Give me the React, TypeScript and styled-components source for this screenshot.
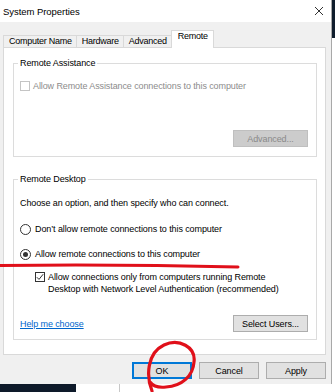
import React from "react";
import styled, { createGlobalStyle } from "styled-components";

const GlobalStyle = createGlobalStyle`
  html, body {
    margin: 0;
    padding: 0;
    background: #fff;
  }
  body {
    font-family: "Liberation Sans", Arial, sans-serif;
    font-size: 9px;
    color: #000;
  }
  *{
    box-sizing: border-box;
  }
`;

const Screen = styled.div`
  position: relative;
  width: 335px;
  height: 392px;
  overflow: hidden;
  display: flex;
  flex-direction: column;
  background: #fff;
`;
const Desktop = styled.div`
  display: flex;
  height: 384px;
`;
const Dialog = styled.div`
  width: 332px;
  flex-shrink: 0;
  display: flex;
  flex-direction: column;
  background: #f0f0f0;
  border-right: 1px solid #a8a8a8;
`;
const TitleBar = styled.div`
  height: 22px;
  background: #fff;
  display: flex;
  align-items: center;
  justify-content: space-between;
  padding: 0 7px 0 3px;
  >span{
    font-size: 9.5px;
    letter-spacing: -0.05px;
  }
`;
const Body = styled.div`
  flex: 1;
  display: flex;
  flex-direction: column;
  padding: 8px 5px 5px 3px;
`;
const TabStrip = styled.div`
  display: flex;
  align-items: flex-end;
  height: 17px;
`;
const Tab = styled.div<{ $active?: boolean }>`
  position: relative;
  z-index: ${p => (p.$active ? 1 : 0)};
  height: ${p => (p.$active ? 18 : 12)}px;
  margin-bottom: ${p => (p.$active ? -1 : 0)}px;
  margin-left: -1px;
  padding: ${p => (p.$active ? "0 5px 6px 6px" : "0 4px 0 5px")};
  line-height: 11px;
  border: 1px solid #d9d9d9;
  border-bottom: none;
  background: ${p => (p.$active ? "#fff" : "#f0f0f0")};
  white-space: nowrap;
  letter-spacing: -0.25px;
  &:first-child{
    margin-left: 0;
  }
`;
const TabPanel = styled.div`
  background: #fff;
  border: 1px solid #d9d9d9;
  padding: 9px 8px 14px 9px;
`;
const Group = styled.fieldset<{ $bottom: number }>`
  margin: 0;
  min-width: 0;
  border: 1px solid #dcdcdc;
  padding: 0 8px ${p => p.$bottom}px 6px;
  & + &{
    margin-top: 16px;
  }
  >legend{
    padding: 0 2px;
    margin-left: -2px;
    line-height: 12px;
    letter-spacing: -0.1px;
  }
`;
const Text = styled.div<{ $top: number }>`
  margin-top: ${p => p.$top}px;
  line-height: 12px;
  letter-spacing: -0.1px;
  white-space: nowrap;
`;
const Option = styled.label<{ $top: number; $indent?: number; $disabled?: boolean }>`
  display: flex;
  align-items: flex-start;
  gap: 3px;
  margin-top: ${p => p.$top}px;
  margin-left: ${p => p.$indent ?? 0}px;
  line-height: 12px;
  letter-spacing: -0.1px;
  white-space: nowrap;
  color: ${p => (p.$disabled ? "#8c8c8c" : "#000")};
`;
const Box = styled.span<{ $disabled?: boolean }>`
  flex-shrink: 0;
  width: 10px;
  height: 10px;
  margin-top: 1px;
  border: 1px solid ${p => (p.$disabled ? "#c4c4c4" : "#333")};
  background: #fff;
  display: flex;
  align-items: center;
  justify-content: center;
`;
const Radio = styled.span<{ $checked?: boolean }>`
  flex-shrink: 0;
  width: 11px;
  height: 11px;
  margin-top: 0.5px;
  margin-right: 1px;
  border: 1px solid #333;
  border-radius: 50%;
  background: #fff;
  display: flex;
  align-items: center;
  justify-content: center;
  &::after{
    content: '';
    display: ${p => (p.$checked ? "block" : "none")};
    width: 5px;
    height: 5px;
    border-radius: 50%;
    background: #333;
  }
`;
const ActionRow = styled.div<{ $top: number }>`
  display: flex;
  align-items: center;
  justify-content: space-between;
  margin-top: ${p => p.$top}px;
`;
const Link = styled.a`
  color: #0066cc;
  text-decoration: underline;
  letter-spacing: -0.1px;
  line-height: 12px;
`;
const Button = styled.button<{ $width: number; $kind?: "primary" | "disabled" }>`
  width: ${p => p.$width}px;
  height: 17px;
  margin-left: auto;
  padding: 0;
  font-family: inherit;
  font-size: 9px;
  letter-spacing: -0.1px;
  color: ${p => (p.$kind === "disabled" ? "#8a8a8a" : "#000")};
  background: ${p => (p.$kind === "disabled" ? "#cccccc" : "#e1e1e1")};
  border: 1px solid ${p => (p.$kind === "primary" ? "#0078d7" : p.$kind === "disabled" ? "#bfbfbf" : "#adadad")};
  box-shadow: ${p => (p.$kind === "primary" ? "inset 0 0 0 1px #0078d7" : "none")};
`;
const Footer = styled.div`
  display: flex;
  justify-content: flex-end;
  gap: 7px;
  margin-top: 7px;
  >button{
    margin-left: 0;
  }
`;
const SideWindow = styled.div`
  flex: 1;
  display: flex;
  flex-direction: column;
  overflow: hidden;
  >header{
    height: 38px;
    background: #0f1c2c;
  }
  >div{
    flex: 1;
    background: #fff;
  }
`;
const Taskbar = styled.div`
  display: flex;
  height: 8px;
  >span{
    width: 76px;
    background: #0e1a2a;
  }
  >i{
    width: 44px;
    border-right: 1px solid #c8c8c8;
  }
`;
const Annotation = styled.svg`
  position: absolute;
  left: 0;
  top: 0;
  pointer-events: none;
`;

const App = () => {
  return (
    <Screen>
      <GlobalStyle/>
      <Desktop>
        <Dialog>
          <TitleBar>
            <span>System Properties</span>
            <svg width="10" height="10" viewBox="0 0 10 10">
              <path d="M1 1 L9 9 M9 1 L1 9" stroke="#333" strokeWidth="1"/>
            </svg>
          </TitleBar>
          <Body>
            <TabStrip>
              <Tab>Computer Name</Tab>
              <Tab>Hardware</Tab>
              <Tab>Advanced</Tab>
              <Tab $active>Remote</Tab>
            </TabStrip>
            <TabPanel>
              <Group $bottom={9}>
                <legend>Remote Assistance</legend>
                <Option $top={11} $disabled>
                  <Box $disabled/>
                  Allow Remote Assistance connections to this computer
                </Option>
                <ActionRow $top={38}>
                  <Button $width={75} $kind="disabled">Advanced...</Button>
                </ActionRow>
              </Group>
              <Group $bottom={7}>
                <legend>Remote Desktop</legend>
                <Text $top={12}>Choose an option, and then specify who can connect.</Text>
                <Option $top={14}>
                  <Radio/>
                  Don’t allow remote connections to this computer
                </Option>
                <Option $top={13}>
                  <Radio $checked/>
                  Allow remote connections to this computer
                </Option>
                <Option $top={11} $indent={15}>
                  <Box>
                    <svg width="8" height="8" viewBox="0 0 8 8">
                      <path d="M0.8 4.2 L3 6.4 L7.2 1.2" fill="none" stroke="#333" strokeWidth="1"/>
                    </svg>
                  </Box>
                  <span>
                    Allow connections only from computers running Remote<br/>
                    Desktop with Network Level Authentication (recommended)
                  </span>
                </Option>
                <ActionRow $top={20}>
                  <Link>Help me choose</Link>
                  <Button $width={75}>Select Users...</Button>
                </ActionRow>
              </Group>
            </TabPanel>
            <Footer>
              <Button $width={60} $kind="primary">OK</Button>
              <Button $width={60}>Cancel</Button>
              <Button $width={60}>Apply</Button>
            </Footer>
          </Body>
        </Dialog>
        <SideWindow>
          <header/>
          <div/>
        </SideWindow>
      </Desktop>
      <Taskbar>
        <span/>
        <i/>
      </Taskbar>
      <Annotation width="335" height="392" viewBox="0 0 335 392">
        <path d="M0 265.5 Q120 264.2 238 267" fill="none" stroke="#e0101a" strokeWidth="3" strokeLinecap="round"/>
        <path d="M152 391 C146 376 147 353 164 345 C179 338 196 347 194 362 C193 376 182 386 166 387 C158 388 153 386 150 382"
              fill="none" stroke="#e0101a" strokeWidth="3.2" strokeLinecap="round"/>
      </Annotation>
    </Screen>
  );
};

export default App;
